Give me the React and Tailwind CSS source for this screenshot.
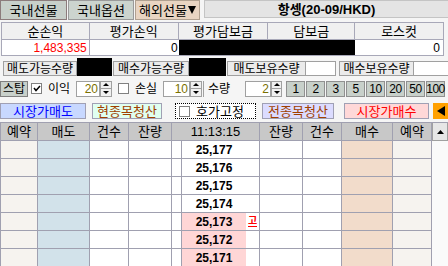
import React from 'react';

const FONT = { fontFamily: '"Liberation Sans", "Noto Sans CJK KR", sans-serif' };

function Tri({ dir = 'up', w = 7, h = 4 }) {
  const pts = {
    up: `0,${h} ${w / 2},0 ${w},${h}`,
    down: `0,0 ${w / 2},${h} ${w},0`,
    left: `${w},0 0,${h / 2} ${w},${h}`,
  }[dir];
  return (
    <svg width={w} height={h} viewBox={`0 0 ${w} ${h}`}>
      <polygon points={pts} fill="#000" />
    </svg>
  );
}

function Spin({ w = 12 }) {
  return (
    <div className="flex flex-col h-[16px] shrink-0" style={{ width: w }}>
      <div className="h-[8px] flex items-center justify-center bg-[#f0f0f0] border border-[#a0a0a0]">
        <Tri dir="up" w={6} h={3} />
      </div>
      <div className="h-[8px] flex items-center justify-center bg-[#f0f0f0] border border-t-0 border-[#a0a0a0]">
        <Tri dir="down" w={6} h={3} />
      </div>
    </div>
  );
}

function Check({ checked }) {
  return (
    <div className="w-[11px] h-[11px] shrink-0 bg-white border border-[#808080] flex items-center justify-center">
      {checked && (
        <svg width="8" height="7" viewBox="0 0 8 7">
          <polyline points="1,3 3,5.5 7,1" fill="none" stroke="#000" strokeWidth="1.5" />
        </svg>
      )}
    </div>
  );
}

const cols = [38, 52, 39, 43, 10, 78, 43, 39, 51, 39];
const bodyBg = ['#f6f3ef', '#d2e2ea', '#fff', '#fff', '#fff', '#fff', '#fff', '#fff', '#f2dccb', '#f6f3ef'];

const rows = [
  { p: '25,177' },
  { p: '25,176' },
  { p: '25,175' },
  { p: '25,174' },
  { p: '25,173', pink: true, mark: '고' },
  { p: '25,172', pink: true },
  { p: '25,171', pink: true },
];

export default function App() {
  return (
    <div className="w-[448px] h-[266px] overflow-hidden whitespace-nowrap bg-[#f5f5f5] text-[12px] text-black leading-none" style={FONT}>
      {/* tabs + title */}
      <div className="flex h-[20px] [&>*]:shrink-0">
        <div className="w-[67px] h-[20px] flex items-center justify-center bg-[#c8d0ca] border border-[#8c7c7c] text-[13px]">국내선물</div>
        <div className="ml-[1px] w-[66px] h-[20px] flex items-center justify-center bg-[#ccd4ce] border border-[#9a9a9a] text-[13px]">국내옵션</div>
        <div className="ml-[1px] w-[65px] h-[20px] flex items-center justify-center bg-[#e8d4c2] border border-[#b0a090] text-[13px]">
          해외선물<span className="ml-[1px]"><Tri dir="down" w={8} h={8} /></span>
        </div>
        <div className="ml-[4px] w-[245px] h-[18px] flex items-center justify-center bg-[#e4e4e4] border border-[#c4c4c4] font-bold text-[13px]">
          항셍(20-09/HKD)
        </div>
      </div>

      {/* summary table */}
      <div className="mt-[2px] ml-[1px] w-[443px] border-l border-t border-[#a8a8b8]">
        <div className="flex h-[17px] bg-[#f0f0f0]">
          {[['순손익', 88], ['평가손익', 89], ['평가담보금', 90], ['담보금', 87], ['로스컷', 89]].map(([t, w]) => (
            <div key={t} className="flex items-center justify-center border-r border-b border-[#a8a8b8] text-[13px]" style={{ width: w }}>{t}</div>
          ))}
        </div>
        <div className="flex h-[16px]">
          <div className="w-[88px] flex items-center justify-end pr-[2px] bg-white border-r border-b border-[#a8a8b8] text-[#ff0000] text-[12px]">1,483,335</div>
          <div className="w-[89px] flex items-center justify-end pr-[1px] bg-white border-b border-[#a8a8b8] text-[12px]">0</div>
          <div className="w-[177px] bg-black border-b border-[#a8a8b8]" />
          <div className="w-[89px] flex items-center justify-end pr-[3px] bg-white border-r border-b border-[#a8a8b8] text-[12px]">0</div>
        </div>
      </div>

      {/* possible quantities */}
      <div className="mt-[2px] flex items-end h-[18px] [&>*]:shrink-0">
        <div className="ml-[3px] w-[74px] h-[15px] flex items-center justify-center bg-[#ebebeb] border border-[#a0a0a0] text-[12px]">매도가능수량</div>
        <div className="w-[35px] h-[18px] bg-black" />
        <div className="ml-[1px] w-[76px] h-[15px] flex items-center justify-center bg-[#ebebeb] border border-[#a0a0a0] text-[12px]">매수가능수량</div>
        <div className="w-[37px] h-[18px] bg-black" />
        <div className="ml-[1px] w-[79px] h-[15px] flex items-center justify-center bg-[#ebebeb] border border-[#a0a0a0] text-[12px]">매도보유수량</div>
        <div className="w-[30px] h-[15px] bg-white border border-l-0 border-[#a0a0a0]" />
        <div className="ml-[3px] w-[75px] h-[15px] flex items-center justify-center bg-[#ebebeb] border border-[#a0a0a0] text-[12px]">매수보유수량</div>
        <div className="w-[34px] h-[15px] bg-white border border-l-0 border-r-0 border-[#a0a0a0]" />
      </div>

      {/* stop row */}
      <div className="mt-[4px] flex items-center h-[17px] [&>*]:shrink-0">
        <div className="w-[28px] h-[16px] flex items-center justify-center bg-[#c8d0ca] border border-[#808080] text-[12px]">스탑</div>
        <div className="ml-[3px]"><Check checked /></div>
        <div className="ml-[6px] w-[28px] text-[12px]">이익</div>
        <div className="w-[24px] h-[16px] flex items-center justify-end pr-[1px] bg-white border border-[#a0a0a0] text-[#7a7000] text-[12px]">20</div>
        <Spin w={12} />
        <div className="ml-[6px]"><Check /></div>
        <div className="ml-[6px] w-[28px] text-[12px]">손실</div>
        <div className="w-[27px] h-[16px] flex items-center justify-end pr-[1px] bg-white border border-[#a0a0a0] text-[#7a7000] text-[12px]">10</div>
        <Spin w={12} />
        <div className="ml-[1px] w-[42px] h-[16px] pl-[4px] flex items-center border-l border-[#a0a0a0] text-[12px]">수량</div>
        <div className="w-[26px] h-[16px] flex items-center justify-end pr-[1px] bg-white border border-[#a0a0a0] text-[#7a7000] text-[12px]">2</div>
        <Spin w={11} />
        <div className="ml-[4px] flex gap-[1px] [&>*]:shrink-0">
          {['1', '2', '3', '5', '10', '20', '50', '100'].map((n) => (
            <div key={n} className="w-[19px] h-[16px] flex items-center justify-center bg-[#c8d0ca] border border-[#909090] text-[12px] tracking-[-0.5px]">{n}</div>
          ))}
        </div>
      </div>

      {/* order buttons */}
      <div className="mt-[6px] flex items-center h-[16px] [&>*]:shrink-0">
        <div className="w-[86px] h-[16px] flex items-center justify-center bg-[#c8d8ff] border border-[#a0a0b4] text-[#0000ff] text-[13px]">시장가매도</div>
        <div className="ml-[6px] w-[70px] h-[16px] flex items-center justify-center bg-[#e0fff0] border border-[#a0a0b4] text-[#a04000] text-[13px]">현종목청산</div>
        <div className="ml-[13px] w-[81px] h-[16px] flex items-center pl-[3px] bg-white border border-dotted border-[#000] text-[13px]">
          <Check /><span className="ml-[6px]">호가고정</span>
        </div>
        <div className="ml-[6px] w-[72px] h-[16px] flex items-center justify-center bg-[#dcdcff] border border-[#a0a0b4] text-[#a04000] text-[13px]">전종목청산</div>
        <div className="ml-[10px] w-[85px] h-[16px] flex items-center justify-center bg-[#ffd8d8] border border-[#a0a0b4] text-[#ff0000] text-[13px]">시장가매수</div>
        <div className="ml-[4px] w-[15px] h-[16px] flex items-center justify-center bg-[#ffa000]">
          <Tri dir="left" w={8} h={10} />
        </div>
      </div>

      {/* hoga grid */}
      <div className="mt-[3px] border-t border-[#a0a0b0]">
        <div className="flex h-[18px] [&>*]:shrink-0">
          {[['예약', 38], ['매도', 52], ['건수', 39], ['잔량', 43], ['11:13:15', 88], ['잔량', 43], ['건수', 39], ['매수', 51], ['예약', 39]].map(([t, w], i) => (
            <div
              key={i}
              className={`flex items-center justify-center bg-[#c8c8c8] border-r border-b border-[#a0a0b0] text-[13px] ${i === 0 ? 'border-l' : ''}`}
              style={{ width: w }}
            >
              {t}
            </div>
          ))}
          <div className="w-[16px] flex items-center justify-center bg-[#e6e6e6] border border-t-0 border-[#a0a0a0]">
            <Tri dir="up" w={7} h={4} />
          </div>
        </div>
        {rows.map((r) => (
          <div key={r.p} className="flex h-[18px] [&>*]:shrink-0">
            {cols.map((w, i) => (
              <div
                key={i}
                className={`flex border-r border-b border-[#a0a0b0] ${i === 0 ? 'border-l' : ''}`}
                style={{ width: w, background: bodyBg[i] }}
              >
                {i === 5 && (
                  <>
                    <div className={`w-[64px] flex items-center justify-center font-bold text-[12px] ${r.pink ? 'bg-[#ffd6d6]' : ''}`}>{r.p}</div>
                    <div className="flex-1 flex items-center justify-center text-[#ff0000] font-bold text-[10px]">
                      {r.mark && <span className="border-b border-[#ff0000] leading-[10px]">{r.mark}</span>}
                    </div>
                  </>
                )}
              </div>
            ))}
            <div className="w-[16px] bg-[#fafafa]" />
          </div>
        ))}
      </div>
    </div>
  );
}
